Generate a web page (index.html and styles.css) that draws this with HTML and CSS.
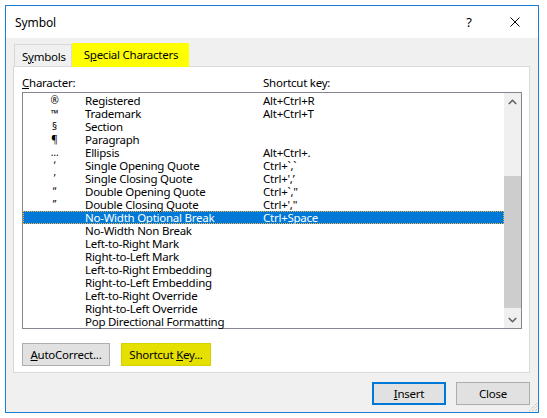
FILE: index.html
```html
<!DOCTYPE html>
<html>
<head>
<meta charset="utf-8">
<link rel="stylesheet" href="styles.css">
</head>
<body>
<div class="window">
  <div class="titlebar">
    <span class="title">Symbol</span>
    <div class="caption-btns">
      <span class="cap-btn">?</span>
      <span class="cap-btn">
        <svg width="10" height="10" viewBox="0 0 10 10"><path d="M0.5 0.5 L9.5 9.5 M9.5 0.5 L0.5 9.5" stroke="#000" stroke-width="1" fill="none"/></svg>
      </span>
    </div>
  </div>
  <div class="client">
    <div class="tabs">
      <span class="tab">S<u>y</u>mbols</span>
      <span class="tab active">S<u>p</u>ecial Characters</span>
    </div>
    <div class="panel">
      <div class="labels">
        <span class="lab-char"><u>C</u>haracter:</span>
        <span class="lab-key">Shortcut key:</span>
      </div>
      <div class="listbox">
        <div class="rows">
          <div class="row"><span class="sym">®</span><span>Registered</span><span>Alt+Ctrl+R</span></div>
          <div class="row"><span class="sym">™</span><span>Trademark</span><span>Alt+Ctrl+T</span></div>
          <div class="row"><span class="sym">§</span><span>Section</span><span></span></div>
          <div class="row"><span class="sym">¶</span><span>Paragraph</span><span></span></div>
          <div class="row"><span class="sym">…</span><span>Ellipsis</span><span>Alt+Ctrl+.</span></div>
          <div class="row"><span class="sym">‘</span><span>Single Opening Quote</span><span>Ctrl+`,`</span></div>
          <div class="row"><span class="sym">’</span><span>Single Closing Quote</span><span>Ctrl+',’</span></div>
          <div class="row"><span class="sym">“</span><span>Double Opening Quote</span><span>Ctrl+`,"</span></div>
          <div class="row"><span class="sym">”</span><span>Double Closing Quote</span><span>Ctrl+',"</span></div>
          <div class="row selected"><span class="sym"></span><span>No-Width Optional Break</span><span>Ctrl+Space</span></div>
          <div class="row"><span class="sym"></span><span>No-Width Non Break</span><span></span></div>
          <div class="row"><span class="sym"></span><span>Left-to-Right Mark</span><span></span></div>
          <div class="row"><span class="sym"></span><span>Right-to-Left Mark</span><span></span></div>
          <div class="row"><span class="sym"></span><span>Left-to-Right Embedding</span><span></span></div>
          <div class="row"><span class="sym"></span><span>Right-to-Left Embedding</span><span></span></div>
          <div class="row"><span class="sym"></span><span>Left-to-Right Override</span><span></span></div>
          <div class="row"><span class="sym"></span><span>Right-to-Left Override</span><span></span></div>
          <div class="row"><span class="sym"></span><span>Pop Directional Formatting</span><span></span></div>
        </div>
        <div class="scrollbar">
          <div class="arrow">
            <svg width="9" height="6" viewBox="0 0 9 6"><path d="M0.8 5 L4.5 1.3 L8.2 5" stroke="#606060" stroke-width="1.6" fill="none"/></svg>
          </div>
          <div class="track">
            <div class="track-top"></div>
            <div class="thumb"></div>
          </div>
          <div class="arrow">
            <svg width="9" height="6" viewBox="0 0 9 6"><path d="M0.8 1 L4.5 4.7 L8.2 1" stroke="#606060" stroke-width="1.6" fill="none"/></svg>
          </div>
        </div>
      </div>
      <div class="panel-btns">
        <span class="btn btn-auto"><span><u>A</u>utoCorrect...</span></span>
        <span class="btn btn-key"><span>Shortcut <u>K</u>ey...</span></span>
      </div>
    </div>
    <div class="dialog-btns">
      <span class="btn btn-default"><span><u>I</u>nsert</span></span>
      <span class="btn"><span>Close</span></span>
    </div>
    <div class="grip">
      <svg width="10" height="10" viewBox="0 0 10 10">
        <path d="M9 1 L1 9 M9 4 L4 9 M9 7 L7 9" stroke="#b8b8b8" stroke-width="1" stroke-dasharray="1 1" fill="none"/>
      </svg>
    </div>
  </div>
</div>
</body>
</html>
```

FILE: styles.css
```css
html, body {
  margin: 0;
  padding: 0;
  background: #ffffff;
}
body {
  font-family: "Noto Sans", "Open Sans", sans-serif;
  font-size: 11.5px;
  color: #000;
}
u {
  text-decoration: underline;
  text-underline-offset: 1px;
}
.window {
  margin: 5px;
  width: 532px;
  height: 406px;
  border: 1px solid #1a7fd4;
  display: flex;
  flex-direction: column;
  background: #f0f0f0;
  position: relative;
}
.titlebar {
  height: 32px;
  background: #ffffff;
  display: flex;
  align-items: center;
  justify-content: space-between;
  flex: none;
}
.title {
  padding-left: 9px;
  font-size: 12px;
  letter-spacing: -0.1px;
}
.caption-btns {
  display: flex;
  height: 32px;
}
.cap-btn {
  width: 46px;
  height: 32px;
  display: flex;
  align-items: center;
  justify-content: center;
  font-size: 13px;
}
.client {
  flex: 1;
  display: flex;
  flex-direction: column;
  padding: 5px 8px 0 7px;
  position: relative;
}
.tabs {
  display: flex;
  align-items: flex-end;
  height: 23px;
  padding-left: 1px;
  position: relative;
  z-index: 1;
}
.tab {
  height: 22px;
  box-sizing: border-box;
  border: 1px solid #d9d9d9;
  border-bottom: none;
  padding: 4px 5px 0 7px;
  letter-spacing: -0.25px;
  background: #f0f0f0;
}
.tab.active {
  height: 24px;
  margin-bottom: -1px;
  background: #ffff00;
  border-color: #ffff00;
  padding: 3px 10px 0 11px;
}
.panel {
  height: 307px;
  box-sizing: border-box;
  border: 1px solid #d9d9d9;
  background: #ffffff;
  padding: 9px 7px 0 8px;
  display: flex;
  flex-direction: column;
}
.labels {
  height: 13px;
  line-height: 13px;
  display: flex;
  letter-spacing: -0.25px;
}
.lab-char {
  width: 241px;
}
.listbox {
  margin-top: 3px;
  height: 237px;
  box-sizing: border-box;
  border: 1px solid #828790;
  display: flex;
}
.rows {
  flex: 1;
  padding-top: 1px;
}
.row {
  height: 13px;
  line-height: 13px;
  display: grid;
  grid-template-columns: 62px 178px 1fr;
  letter-spacing: -0.25px;
  white-space: nowrap;
  box-sizing: border-box;
}
.row .sym {
  text-align: center;
  font-size: 10px;
  padding-left: 1px;
}
.row.selected {
  background: #0078d7;
  color: #ffffff;
  outline: 1px dotted #f2b447;
  outline-offset: -1px;
}
.scrollbar {
  width: 17px;
  background: #f0f0f0;
  display: flex;
  flex-direction: column;
}
.arrow {
  height: 17px;
  display: flex;
  align-items: center;
  justify-content: center;
  flex: none;
}
.track {
  flex: 1;
  display: flex;
  flex-direction: column;
}
.track-top {
  height: 66px;
}
.thumb {
  height: 132px;
  background: #cdcdcd;
}
.panel-btns {
  display: flex;
  gap: 11px;
  margin-top: 14px;
}
.btn {
  height: 23px;
  box-sizing: border-box;
  border: 1px solid #adadad;
  background: #e1e1e1;
  display: flex;
  align-items: center;
  justify-content: center;
  letter-spacing: -0.25px;
  white-space: pre;
}
.btn-auto {
  width: 88px;
}
.btn-key {
  width: 90px;
  background: #e6e000;
  border-color: #d6d200;
}
.dialog-btns {
  display: flex;
  justify-content: flex-end;
  gap: 10px;
  margin-top: 9px;
}
.dialog-btns .btn {
  width: 74px;
}
.btn-default {
  border: 2px solid #0078d7;
}
.grip {
  position: absolute;
  right: 0;
  bottom: 0;
  width: 10px;
  height: 10px;
  display: flex;
}
```
